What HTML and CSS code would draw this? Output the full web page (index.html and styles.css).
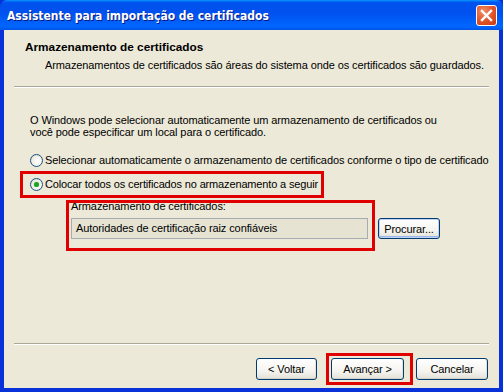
FILE: index.html
```html
<!DOCTYPE html>
<html lang="pt">
<head>
    <meta charset="UTF-8">
    <title>Assistente para importação de certificados</title>
    <link rel="stylesheet" href="styles.css">
</head>
<body>
    <div class="window">
        <div class="titlebar">
            <span class="title">Assistente para importação de certificados</span>
            <span class="close">
                <svg width="13" height="13" viewBox="0 0 13 13"><path d="M2 2 L11 11 M11 2 L2 11" stroke="#fff" stroke-width="2.4" stroke-linecap="square"/></svg>
            </span>
        </div>
        <div class="frame">
            <div class="header">
                <div class="header-title">Armazenamento de certificados</div>
                <div class="header-sub">Armazenamentos de certificados são áreas do sistema onde os certificados são guardados.</div>
            </div>
            <div class="sep"></div>

            <div class="content">
                <p class="intro">O Windows pode selecionar automaticamente um armazenamento de certificados ou<br>você pode especificar um local para o certificado.</p>

                <label class="radio-row first">
                    <span class="radio"></span>
                    Selecionar automaticamente o armazenamento de certificados conforme o tipo de certificado
                </label>
                <label class="radio-row">
                    <span class="radio checked"></span>
                    <span class="tight">Colocar todos os certificados no armazenamento a seguir</span>
                </label>

                <div class="store">
                    <div class="store-label">Armazenamento de certificados:</div>
                    <div class="store-row">
                        <div class="textbox">Autoridades de certificação raiz confiáveis</div>
                        <button class="btn browse">Procurar...</button>
                    </div>
                </div>
            </div>

            <div class="footer">
                <div class="sep"></div>
                <div class="buttons">
                    <button class="btn back">&lt; Voltar</button>
                    <button class="btn next">Avançar &gt;</button>
                    <button class="btn cancel">Cancelar</button>
                </div>
            </div>
        </div>

        <div class="mark mark-radio"></div>
        <div class="mark mark-store"></div>
        <div class="mark mark-next"></div>
    </div>
</body>
</html>
```

FILE: styles.css
```css
body {
    margin: 0;
    font-family: "Liberation Sans", Arial, sans-serif;
    font-size: 11px;
    letter-spacing: -0.1px;
    color: #000;
}
.window {
    position: relative;
    width: 503px;
    height: 392px;
    display: flex;
    flex-direction: column;
    background: #0831d9;
}
.titlebar {
    height: 30px;
    display: flex;
    align-items: center;
    padding: 0 6px 0 7px;
    box-sizing: border-box;
    background: linear-gradient(to bottom, #0997ff 0%, #0053ee 8%, #0050ee 40%, #0066ff 88%, #0055e6 100%);
    border-radius: 7px 7px 0 0;
}
.title {
    flex: 1;
    color: #fff;
    font-family: "DejaVu Sans Condensed", "DejaVu Sans", sans-serif;
    font-weight: bold;
    font-size: 12px;
    letter-spacing: 0;
    text-shadow: 1px 1px 0 #0a1883;
    padding-top: 2px;
}
.close {
    width: 21px;
    height: 21px;
    box-sizing: border-box;
    border: 1px solid #fff;
    border-radius: 3px;
    background: radial-gradient(circle at 35% 30%, #f0906c 0%, #e2562c 50%, #c9380f 100%);
    display: flex;
    align-items: center;
    justify-content: center;
    margin-top: 1px;
}
.frame {
    flex: 1;
    display: flex;
    flex-direction: column;
    margin: 0 4px 4px 4px;
    background: #ece9d8;
}
.header {
    height: 56px;
    box-sizing: border-box;
    padding: 11px 0 0 21px;
}
.header-title {
    font-weight: bold;
    font-size: 11.8px;
    letter-spacing: 0;
    line-height: 13px;
}
.header-sub {
    line-height: 13px;
    margin: 5px 0 0 20px;
}
.sep {
    margin: 0 10px;
    border-top: 1px solid #aca899;
    border-bottom: 1px solid #fff;
}
.content {
    padding: 0 0 0 26px;
}
.intro {
    margin: 26px 0 0 0;
    line-height: 12px;
}
.radio-row {
    display: flex;
    align-items: center;
    height: 13px;
    line-height: 13px;
    margin-top: 11px;
}
.radio-row.first {
    margin-top: 16px;
}
.tight {
    letter-spacing: -0.15px;
}
.radio {
    width: 13px;
    height: 13px;
    box-sizing: border-box;
    border: 1px solid #1c5180;
    border-radius: 50%;
    background: radial-gradient(circle at 60% 60%, #ffffff 0%, #f0efe7 55%, #d4d2c4 100%);
    margin-right: 2px;
    position: relative;
}
.radio.checked::after {
    content: "";
    position: absolute;
    left: 3px;
    top: 3px;
    width: 5px;
    height: 5px;
    border-radius: 50%;
    background: #21a121;
    box-shadow: 0 0 1px #5fd65f;
}
.store {
    margin: 9px 0 0 41px;
}
.store-label {
    line-height: 13px;
}
.store-row {
    display: flex;
    gap: 10px;
    margin-top: 5px;
}
.textbox {
    width: 297px;
    height: 21px;
    box-sizing: border-box;
    border: 1px solid #a5acb2;
    background: #e6e3d3;
    padding: 0 4px;
    line-height: 19px;
}
.btn {
    font-family: "Liberation Sans", Arial, sans-serif;
    font-size: 11px;
    letter-spacing: -0.1px;
    color: #000;
    border: 1px solid #003c74;
    border-radius: 3px;
    background: linear-gradient(to bottom, #ffffff 0%, #f5f4ef 60%, #e3e2d8 100%);
    box-shadow: inset 0 -1px 0 #d6d0c5, inset -1px 0 0 #e3e0d4;
    padding: 0;
}
.browse {
    width: 62px;
    height: 21px;
    box-shadow: inset 0 0 0 1px #c2d2f0, inset 0 -2px 0 #9bb6e8;
}
.footer {
    margin-top: auto;
}
.buttons {
    display: flex;
    justify-content: flex-end;
    padding: 13px 11px 8px 0;
}
.buttons .btn {
    height: 22px;
}
.back {
    width: 61px;
}
.next {
    width: 73px;
    margin-left: 14px;
}
.cancel {
    width: 72px;
    margin-left: 12px;
}
.mark {
    position: absolute;
    border: 3px solid #e00000;
    box-sizing: border-box;
}
.mark-radio {
    left: 20px;
    top: 171px;
    width: 304px;
    height: 27px;
}
.mark-store {
    left: 66px;
    top: 200px;
    width: 309px;
    height: 51px;
}
.mark-next {
    left: 326px;
    top: 353px;
    width: 87px;
    height: 32px;
}
```
